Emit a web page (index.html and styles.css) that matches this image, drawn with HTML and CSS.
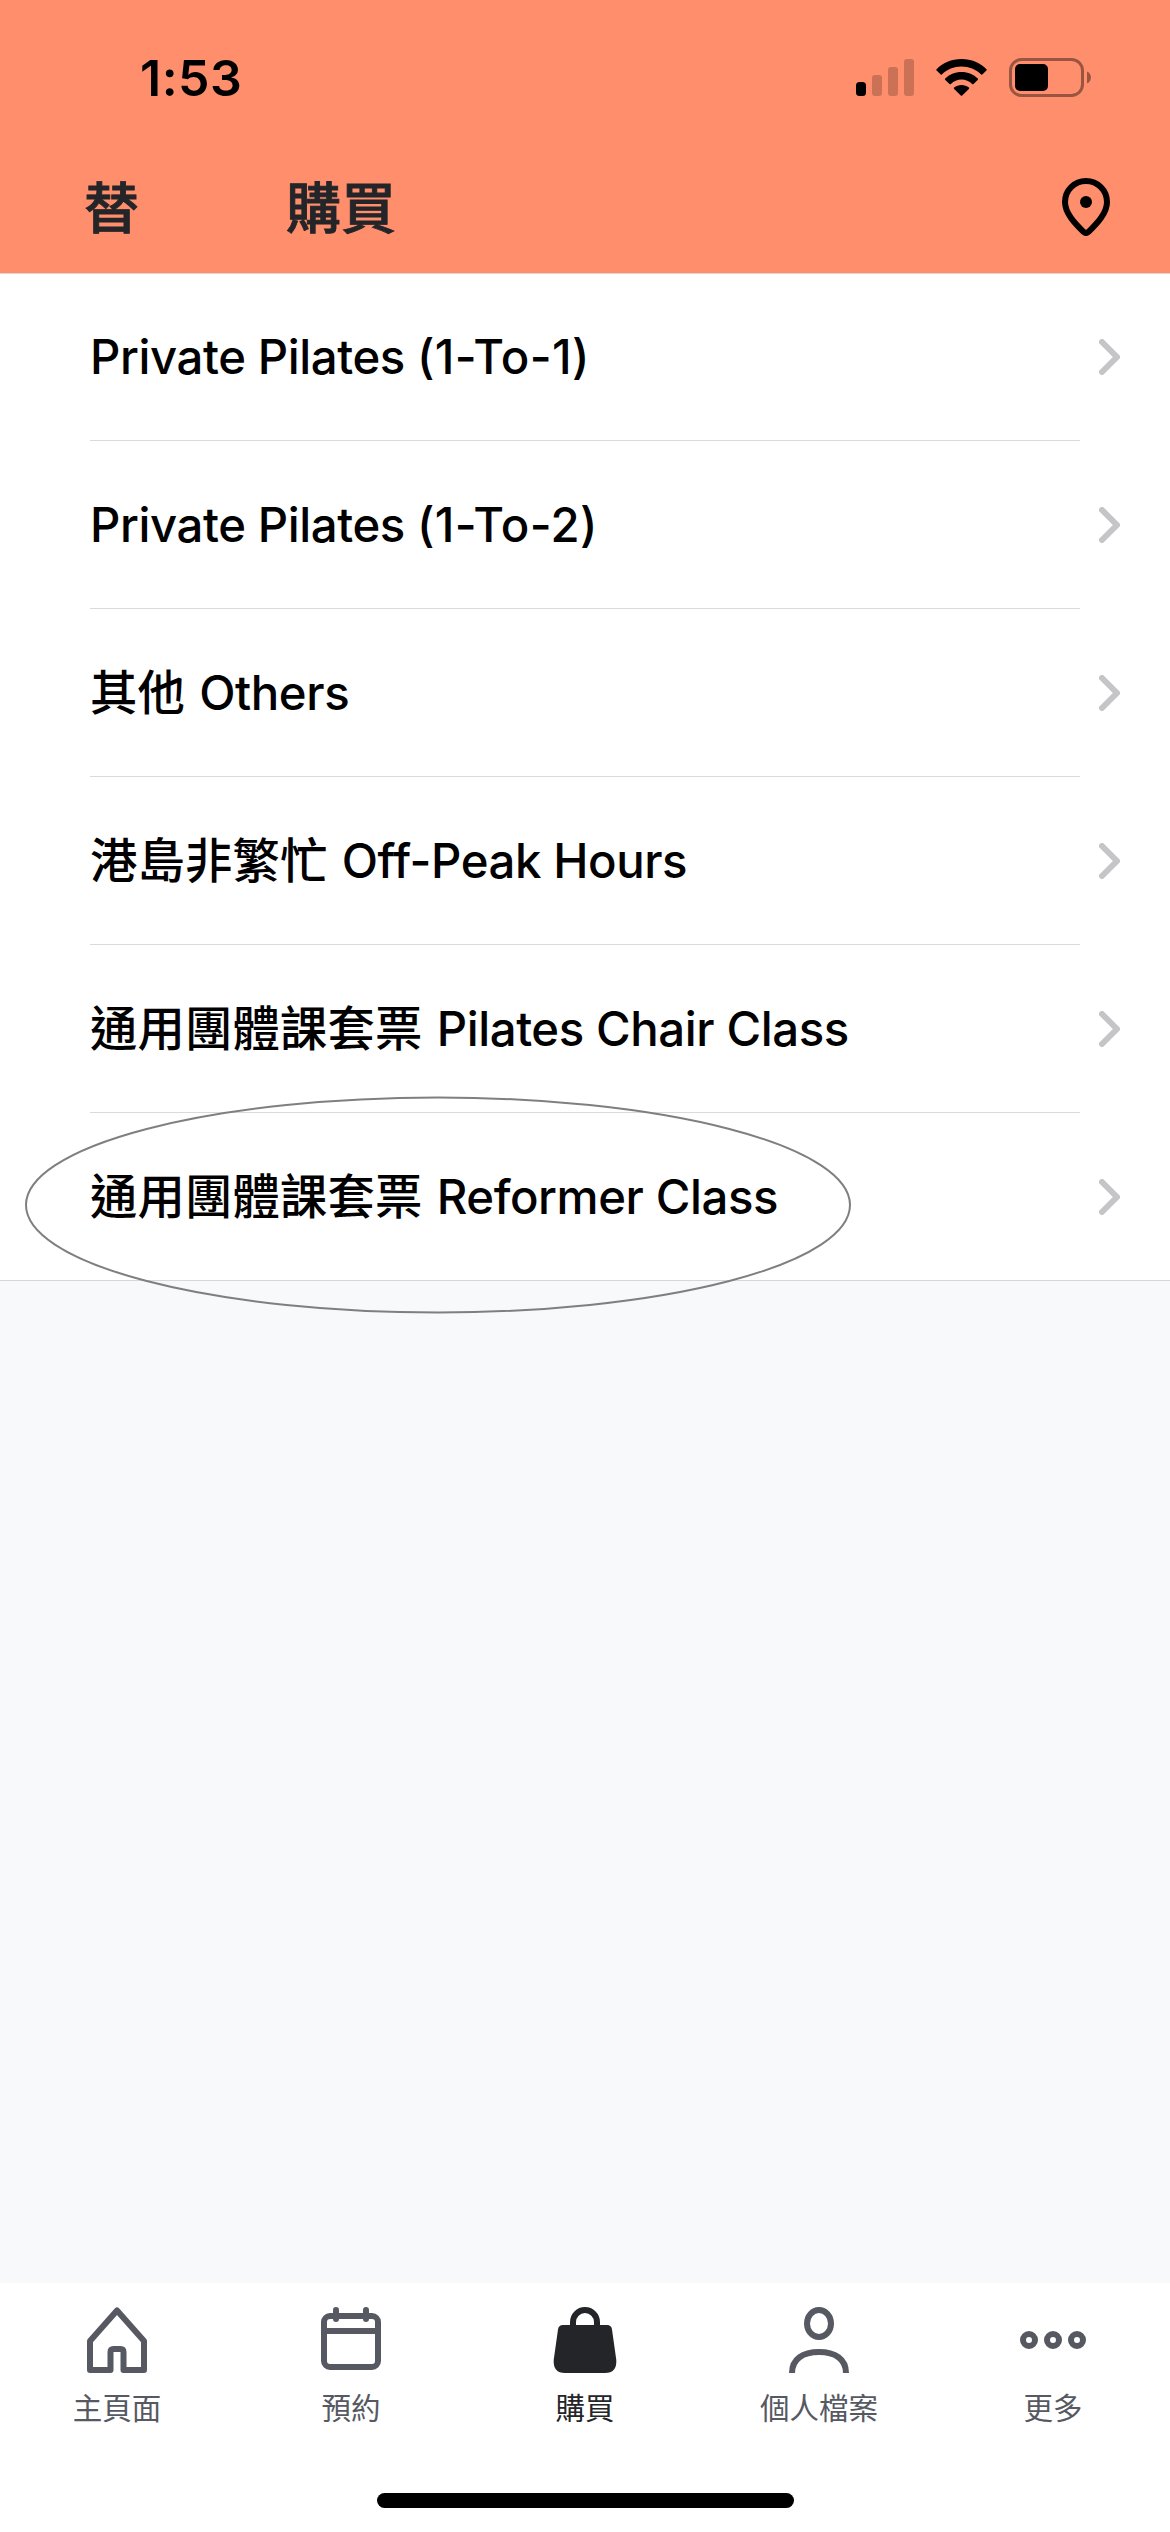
FILE: index.html
```html
<!DOCTYPE html>
<html lang="zh-Hant">
<head>
<meta charset="utf-8">
<title>購買</title>
<link rel="stylesheet" href="styles.css">
</head>
<body>
<div class="screen">
  <header class="header">
    <div class="status">
      <span class="time">1:53</span>
      <svg class="signal" width="58" height="37" viewBox="0 0 58 37"><rect y="23" width="10" height="14" rx="3.5"/><g opacity=".2"><rect x="16" y="16" width="10" height="21" rx="3"/><rect x="32" y="8" width="10" height="29" rx="3"/><rect x="48" width="10" height="37" rx="3"/></g></svg>
      <svg class="wifi" width="51" height="37" viewBox="0 0 51 37"><path d="M25.500 0C35.500 0 44.500 4 50.500 10.300Q51 11 50.400 11.600L46.300 15.400Q45.600 16 44.900 15.300C40 10.500 33 7.600 25.500 7.600S11 10.500 6.100 15.300Q5.400 16 4.700 15.400L.6 11.600Q0 11 .5 10.300C6.500 4 15.500 0 25.500 0ZM25.500 13C32 13 37.800 15.500 41.800 19.600Q42.300 20.300 41.700 20.900L37.500 24.900Q36.800 25.500 36.100 24.900C33.300 22.200 29.600 20.600 25.500 20.600S17.700 22.200 14.900 24.900Q14.200 25.500 13.500 24.900L9.300 20.900Q8.700 20.300 9.200 19.600C13.200 15.500 19 13 25.500 13ZM25.500 26C28.300 26 30.900 26.900 32.900 28.600Q33.500 29.200 32.900 29.900L26.200 36.500Q25.500 37.200 24.800 36.500L18.100 29.900Q17.500 29.200 18.100 28.600C20.100 26.900 22.700 26 25.500 26Z"/></svg>
      <svg class="battery" width="82" height="39" viewBox="0 0 82 39"><rect x="1.500" y="1.500" width="72" height="36" rx="11" fill="none" stroke="#000" stroke-width="3" opacity=".4"/><path d="M78 13.500C83.300 15.500 83.300 23.500 78 25.500Z" opacity=".4"/><rect x="6" y="6" width="33" height="27" rx="5"/></svg>
    </div>
    <div class="titlebar">
      <span class="initial">替</span>
      <h1 class="title">購買</h1>
      <svg class="pin" width="48" height="58" viewBox="0 0 48 58"><path d="M24 3C12.400 3 3 12.200 3 24c0 11 9.500 21 18.500 29.800q2.500 2.300 5 0C35.500 45 45 35 45 24 45 12.200 35.600 3 24 3Z" fill="none" stroke="#000" stroke-width="6"/><circle cx="24" cy="24" r="6"/></svg>
    </div>
  </header>
  <main class="list">
    <a class="row"><span class="label"><span class="latin">Private Pilates </span><span class="code">(1-To-1)</span></span><svg class="chevron" viewBox="0 0 21 36"><path d="M3 3 18 18 3 33"/></svg></a>
    <a class="row"><span class="label"><span class="latin">Private Pilates </span><span class="code">(1-To-2)</span></span><svg class="chevron" viewBox="0 0 21 36"><path d="M3 3 18 18 3 33"/></svg></a>
    <a class="row"><span class="label">其他<span class="latin"> Others</span></span><svg class="chevron" viewBox="0 0 21 36"><path d="M3 3 18 18 3 33"/></svg></a>
    <a class="row"><span class="label">港島非繁忙<span class="latin"> Off-Peak Hours</span></span><svg class="chevron" viewBox="0 0 21 36"><path d="M3 3 18 18 3 33"/></svg></a>
    <a class="row"><span class="label">通用團體課套票<span class="latin"> Pilates Chair Class</span></span><svg class="chevron" viewBox="0 0 21 36"><path d="M3 3 18 18 3 33"/></svg></a>
    <a class="row last"><span class="label">通用團體課套票<span class="latin"> Reformer Class</span></span><svg class="chevron" viewBox="0 0 21 36"><path d="M3 3 18 18 3 33"/></svg>
      <svg class="mark" viewBox="0 0 826 218"><ellipse cx="413" cy="109" rx="412" ry="107.5"/></svg></a>
  </main>
  <nav class="tabs">
    <a class="tab"><svg class="icon" viewBox="0 0 66 66"><path d="M33 3.500 6 34V63H26.500V45Q26.500 42 29.500 42H36.500Q39.500 42 39.500 45V63H60V34Z"/></svg><span>主頁面</span></a>
    <a class="tab"><svg class="icon" viewBox="0 0 66 66"><rect x="6" y="9" width="54" height="51" rx="6"/><path d="M6 24H60"/><path d="M18 3v9M48 3v9" stroke-linecap="round"/></svg><span>預約</span></a>
    <a class="tab active"><svg class="icon" viewBox="0 0 66 66"><path class="solid" d="M11 18H55Q59.500 18 60 22.500L64.300 53Q65 66 53 66H13Q1 66 1.700 53L6 22.500Q6.500 18 11 18Z"/><path d="M21 21V15a12 12 0 0 1 24 0V21"/></svg><span>購買</span></a>
    <a class="tab"><svg class="icon" viewBox="0 0 66 66"><ellipse cx="33" cy="16.500" rx="12" ry="13.500"/><path d="M6 66C6 52 17 45 33 45S60 52 60 66"/></svg><span>個人檔案</span></a>
    <a class="tab"><svg class="icon" viewBox="0 0 66 66"><circle cx="9" cy="33" r="6"/><circle cx="33" cy="33" r="6"/><circle cx="57" cy="33" r="6"/></svg><span>更多</span></a>
  </nav>
  <div class="home"><div class="indicator"></div></div>
</div>
</body>
</html>
```
FILE: styles.css
```css
* { box-sizing: border-box; }
body { margin: 0; font-family: Inter, "Noto Sans CJK TC", sans-serif; }
.screen { width: 1170px; height: 2532px; display: flex; flex-direction: column; background: #f8f9fb; overflow: hidden; }
svg { display: block; flex: none; }

.header { height: 274px; background: #ff8e6c; border-bottom: 1px solid #dcd5d3; }
.status { height: 155px; display: flex; align-items: center; padding: 0 79px 0 140px; }
.time { font-size: 50px; font-weight: 600; line-height: 60px; letter-spacing: 0.5px; }
.signal { margin-left: auto; }
.wifi { margin-left: 22px; }
.battery { margin-left: 22px; }
.titlebar { height: 104px; display: flex; align-items: center; padding: 0 60px 0 84px; color: #242529; }
.initial, .title { margin: 0; padding-top: 2px; font-size: 55px; font-weight: 500; line-height: 80px; -webkit-text-stroke: 0.9px currentColor; }
.title { margin-left: 147px; }
.pin { margin-left: auto; }

.list { background: #fff; border-bottom: 1px solid #d6d7d9; height: 1007px; }
.row { position: relative; display: flex; align-items: center; justify-content: space-between; height: 168px; padding: 0 50px 1px 90px; }
.row:first-child { height: 167px; }
.row:not(.last)::after { content: ""; position: absolute; left: 90px; right: 90px; bottom: 0; height: 1px; background: #d9dada; }
.label { font-size: 47.300px; font-weight: 500; line-height: 60px; letter-spacing: 0.2px; white-space: nowrap; color: #000; }
.latin { letter-spacing: -0.4px; }
.label > .latin:last-child { margin-left: 2px; }
.code { letter-spacing: 0.3px; }
.chevron { width: 21px; height: 36px; fill: none; stroke: #c5c5c8; stroke-width: 6; stroke-linecap: round; stroke-linejoin: round; }
.mark { position: absolute; left: 25px; top: -17px; width: 826px; height: 218px; fill: none; stroke: #7f7f7f; stroke-width: 2; }

.tabs { margin-top: auto; height: 180px; padding-top: 24px; background: #fff; display: grid; grid-template-columns: repeat(5, 1fr); }
.tab { display: flex; flex-direction: column; align-items: center; color: #565962; font-size: 29.500px; line-height: 44px; gap: 13px; }
.active { color: #242529; }
.icon { width: 66px; height: 66px; fill: none; stroke: currentColor; stroke-width: 6; stroke-linejoin: round; }
.icon .solid { fill: currentColor; stroke: none; }
.home { height: 69px; background: #fff; display: flex; justify-content: center; padding-top: 30px; }
.indicator { width: 417px; height: 15px; border-radius: 8px; background: #000; }
```
